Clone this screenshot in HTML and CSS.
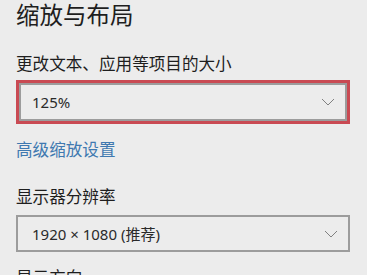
FILE: index.html
```html
<!DOCTYPE html>
<html lang="zh-CN">
<head>
<meta charset="utf-8">
<title>缩放与布局</title>
<link rel="stylesheet" href="styles.css">
</head>
<body>
<main class="page">
  <h1 class="title">缩放与布局</h1>
  <div class="label">更改文本、应用等项目的大小</div>
  <div class="highlight">
    <div class="select">
      <span class="value">125%</span>
      <svg class="chev" width="14" height="8" viewBox="0 0 14 8"><polyline points="1,1 7,7 13,1" fill="none" stroke="#808080" stroke-width="1"/></svg>
    </div>
  </div>
  <a class="link" href="#">高级缩放设置</a>
  <div class="label label2">显示器分辨率</div>
  <div class="select select2">
    <span class="value">1920 × 1080 (推荐)</span>
    <svg class="chev" width="14" height="8" viewBox="0 0 14 8"><polyline points="1,1 7,7 13,1" fill="none" stroke="#808080" stroke-width="1"/></svg>
  </div>
  <div class="label label3">显示方向</div>
</main>
</body>
</html>
```
FILE: styles.css
```css
html, body {
  margin: 0;
  padding: 0;
  background: #ececec;
  overflow: hidden;
}
.page {
  padding: 0 0 0 16px;
  width: 334px;
  font-family: "Noto Sans CJK SC", "Noto Sans", sans-serif;
  color: #1e1e1e;
}
.title {
  margin: 0;
  font-size: 23.5px;
  line-height: 28px;
  font-weight: 400;
}
.label {
  margin-top: 25px;
  font-size: 16.6px;
  line-height: 20px;
}
.highlight {
  margin-top: 7px;
  border: 3px solid #c94a53;
}
.select {
  display: flex;
  align-items: center;
  justify-content: space-between;
  height: 34px;
  border: 2px solid #9c9c9c;
  padding: 0 10px 0 11px;
}
.value {
  font-family: "Noto Sans", "Noto Sans CJK SC", sans-serif;
  font-size: 15px;
  color: #2a2a2a;
}
.chev {
  display: block;
}
.link {
  display: block;
  margin-top: 15px;
  font-size: 16.6px;
  line-height: 20px;
  color: #4079b0;
  text-decoration: none;
}
.label2 {
  margin-top: 27px;
}
.select2 {
  margin-top: 9px;
  height: 33px;
  padding: 0 10px 0 14px;
}
.label3 {
  margin-top: 15px;
}
```
